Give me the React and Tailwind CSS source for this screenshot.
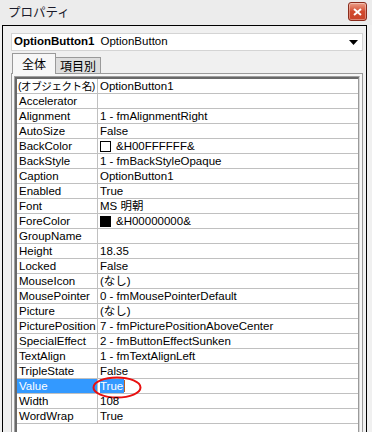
import React from 'react'

const rows = [
  ['(オブジェクト名)', 'OptionButton1'],
  ['Accelerator', ''],
  ['Alignment', '1 - fmAlignmentRight'],
  ['AutoSize', 'False'],
  ['BackColor', '&H00FFFFFF&', 'white'],
  ['BackStyle', '1 - fmBackStyleOpaque'],
  ['Caption', 'OptionButton1'],
  ['Enabled', 'True'],
  ['Font', 'MS 明朝'],
  ['ForeColor', '&H00000000&', 'black'],
  ['GroupName', ''],
  ['Height', '18.35'],
  ['Locked', 'False'],
  ['MouseIcon', '(なし)'],
  ['MousePointer', '0 - fmMousePointerDefault'],
  ['Picture', '(なし)'],
  ['PicturePosition', '7 - fmPicturePositionAboveCenter'],
  ['SpecialEffect', '2 - fmButtonEffectSunken'],
  ['TextAlign', '1 - fmTextAlignLeft'],
  ['TripleState', 'False'],
  ['Value', 'True', null, true],
  ['Width', '108'],
  ['WordWrap', 'True'],
]

const font = "font-['Liberation_Sans','Noto_Sans_CJK_JP',sans-serif]"

export default function App() {
  return (
    <div className={`w-[372px] h-[432px] overflow-hidden flex flex-col bg-[#f0f0f0] text-black ${font}`}>
      {/* Title bar */}
      <div className="h-[25px] shrink-0 flex items-center justify-between pl-[8px] pr-[5px] bg-[#ececec]">
        <span className="text-[12.5px] leading-none font-['Noto_Sans_CJK_JP',sans-serif] text-[#1a1a2a]">プロパティ</span>
        <div className="w-[19px] h-[19px] -mt-[2px] rounded-[3px] border border-[#8a2c1c]
                        bg-gradient-to-b from-[#eba08a] via-[#d24a2e] to-[#c8442a]
                        flex items-center justify-center shadow-[inset_0_0_0_1px_rgba(255,255,255,0.35)]">
          <svg width="9" height="8" viewBox="0 0 9 8">
            <path d="M1 1 L8 7 M8 1 L1 7" stroke="#fff" strokeWidth="2" />
          </svg>
        </div>
      </div>

      {/* Window body */}
      <div className="flex-1 ml-[2px] mr-[5px] border-l border-r border-t border-black flex flex-col pl-[8px] pr-[3px] pt-[7px]">
        {/* Object combo */}
        <div className="h-[18px] shrink-0 bg-white border border-[#d4d4d4] flex items-center pl-[2px] pr-[4px]">
          <span className="text-[11.5px] font-bold leading-none">OptionButton1</span>
          <span className="text-[11.5px] leading-none ml-[6px]">OptionButton</span>
          <div className="flex-1" />
          <svg width="9" height="5" viewBox="0 0 9 5">
            <path d="M0 0 H9 L4.5 5 Z" fill="#000" />
          </svg>
        </div>

        {/* Tabs */}
        <div className="flex items-end h-[20px] mt-[2px] ml-[1px] shrink-0">
          <div className="h-[21px] w-[44px] border border-b-0 border-[#9a9a9a] bg-[#f7f7f7] flex items-center justify-center text-[12px] leading-none font-['Noto_Sans_CJK_JP',sans-serif] relative z-10 -mb-[1px]">
            全体
          </div>
          <div className="h-[16px] w-[45px] border border-l-0 border-b-0 border-[#9a9a9a] bg-[#dedede] flex items-center justify-center text-[12px] leading-none font-['Noto_Sans_CJK_JP',sans-serif]">
            項目別
          </div>
        </div>

        {/* Tab page */}
        <div className="flex-1 border border-b-0 border-[#9a9a9a] bg-[#f7f7f7] p-[2px] pb-0 flex">
          <div className="flex-1 border-l border-t border-[#a0a0a0] border-r border-r-[#d8d8d8] flex">
            <div className="flex-1 border-l-2 border-t-2 border-[#696969] border-r border-r-[#9a9a9a] bg-white">
              {rows.map(([name, value, swatch, sel], i) => (
                <div key={name} className="flex h-[15px] border-b border-[#c0c0c0] text-[11.5px] leading-[14px]">
                  <div className={`w-[81px] shrink-0 border-r border-[#c0c0c0] pl-[1px] whitespace-nowrap overflow-hidden
                                   ${i === 0 ? 'text-[10.5px] tracking-[-0.4px]' : 'pl-[2px]'}
                                   ${sel ? 'bg-[#3399ff] text-white' : ''}`}>
                    {name}
                  </div>
                  <div className="flex-1 pl-[2px] flex items-center whitespace-nowrap overflow-hidden relative">
                    {swatch && (
                      <span className={`w-[11px] h-[11px] border border-black mr-[5px] shrink-0 ${swatch === 'black' ? 'bg-black' : 'bg-white'}`} />
                    )}
                    {sel ? (
                      <>
                        <span className="bg-[#3399ff] text-white pr-[1px]">{value}</span>
                        <span className="w-px h-[12px] bg-[#c06020]" />
                      </>
                    ) : (
                      value
                    )}
                  </div>
                  {sel && (
                    <div className="relative w-0">
                      <svg className="absolute left-[-266px] top-[-3px]" width="50" height="23" viewBox="0 0 50 23">
                        <ellipse cx="25" cy="11.5" rx="23.5" ry="10" fill="none" stroke="#e81010" strokeWidth="2" />
                      </svg>
                    </div>
                  )}
                </div>
              ))}
            </div>
          </div>
        </div>
      </div>
    </div>
  )
}
